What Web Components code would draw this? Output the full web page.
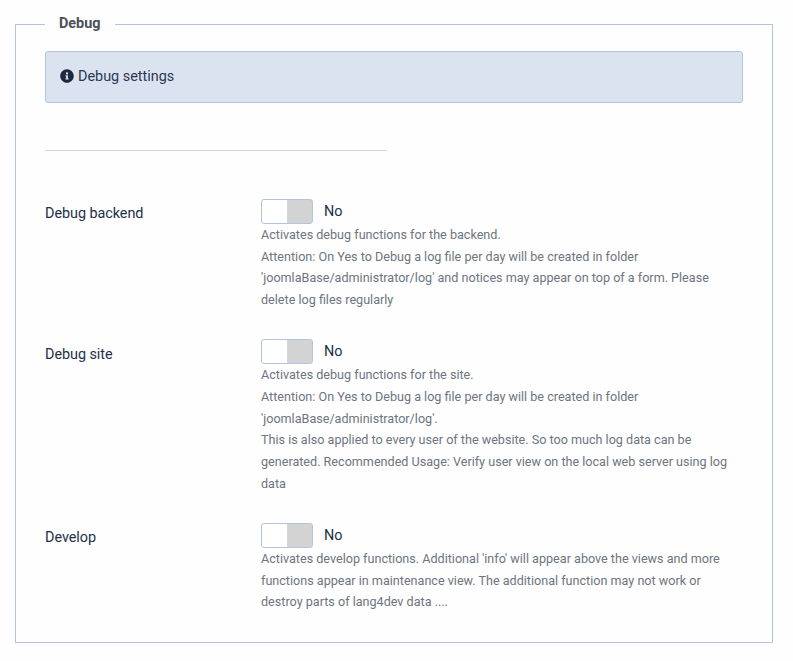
<!DOCTYPE html>
<html lang="en"><head><meta charset="utf-8"><title>Debug</title>
<style>
body{margin:0;background:#fefefe;font-family:Roboto,"Liberation Sans",sans-serif;color:#22262a;padding:15px 20px 18px 15px}
</style></head><body>
<debug-panel></debug-panel>
<script>
class FieldGroup extends HTMLElement{
  constructor(){super();this.attachShadow({mode:'open'}).innerHTML=`<style>
:host{display:block}
fieldset{box-sizing:border-box;height:628px;margin:0;padding:18px 29px 0;border:1px solid #b2c5e0;min-width:0}
legend{padding:0 14px;font-size:14.4px;font-weight:700;line-height:18px;height:18px;color:#495057}
legend ::slotted(*){display:block}
</style><fieldset><legend><slot name="legend"></slot></legend><slot></slot></fieldset>`}
}
class InfoAlert extends HTMLElement{
  constructor(){super();this.attachShadow({mode:'open'}).innerHTML=`<style>
:host{display:flex;align-items:center;gap:4px;box-sizing:border-box;height:52px;padding:0 14px 2px;border:1px solid #b2c5e0;border-radius:3px;background:#dce3f0;color:#2b3850;font-size:14.4px;line-height:22px}
svg{width:14px;height:14px;display:block}
span{padding-top:2px}
</style><svg viewBox="0 0 512 512"><path fill="#1c2a40" d="M256 8C119 8 8 119 8 256s111 248 248 248 248-111 248-248S393 8 256 8zm0 110a42 42 0 1 1 0 84 42 42 0 0 1 0-84zm56 254c0 7-5 12-12 12h-88c-7 0-12-5-12-12v-24c0-7 5-12 12-12h12v-64h-12c-7 0-12-5-12-12v-24c0-7 5-12 12-12h64c7 0 12 5 12 12v100h12c7 0 12 5 12 12v24z"/></svg><span><slot></slot></span>`}
}
class SpacerLine extends HTMLElement{
  constructor(){super();this.attachShadow({mode:'open'}).innerHTML=`<style>
:host{display:block;width:342px;height:1px;background:#d3d3d3;margin:47px 0 48px}
</style>`}
}
class ToggleSwitch extends HTMLElement{
  constructor(){super();this.attachShadow({mode:'open'}).innerHTML=`<style>
:host{display:flex;align-items:center;gap:11px;height:25px;font-size:14.4px;color:#22304a}
i{box-sizing:border-box;width:52px;height:25px;border:1px solid #b4c3e0;border-radius:3px;background:linear-gradient(90deg,#fff 25px,#d3d3d3 25px)}
</style><i></i><span><slot></slot></span>`}
}
class ControlRow extends HTMLElement{
  constructor(){super();this.attachShadow({mode:'open'}).innerHTML=`<style>
:host{display:grid;grid-template-columns:216px 470px;align-items:start;margin-bottom:28.5px}
.label{font-size:14.4px;letter-spacing:-.05px;line-height:22px;padding-top:4.4px;color:#22304a}
.help{font-size:12.6px;line-height:21.7px;color:#6d757e;white-space:nowrap}
</style><div class="label">${this.getAttribute('label')}</div><div><toggle-switch>No</toggle-switch><div class="help"><slot></slot></div></div>`}
}
class DebugPanel extends HTMLElement{
  constructor(){super();this.attachShadow({mode:'open'}).innerHTML=`<style>:host{display:block}</style>
<field-group><span slot="legend">Debug</span>
<info-alert>Debug settings</info-alert><spacer-line></spacer-line>
<control-row label="Debug backend">Activates debug functions for the backend.<br>Attention: On Yes to Debug a log file per day will be created in folder<br>'joomlaBase/administrator/log' and notices may appear on top of a form. Please<br>delete log files regularly</control-row>
<control-row label="Debug site">Activates debug functions for the site.<br>Attention: On Yes to Debug a log file per day will be created in folder<br>'joomlaBase/administrator/log'.<br>This is also applied to every user of the website. So too much log data can be<br>generated. Recommended Usage: Verify user view on the local web server using log<br>data</control-row>
<control-row label="Develop">Activates develop functions. Additional 'info' will appear above the views and more<br>functions appear in maintenance view. The additional function may not work or<br>destroy parts of lang4dev data ....</control-row>
</field-group>`}
}
customElements.define('field-group',FieldGroup);
customElements.define('info-alert',InfoAlert);
customElements.define('spacer-line',SpacerLine);
customElements.define('toggle-switch',ToggleSwitch);
customElements.define('control-row',ControlRow);
customElements.define('debug-panel',DebugPanel);
</script></body></html>
